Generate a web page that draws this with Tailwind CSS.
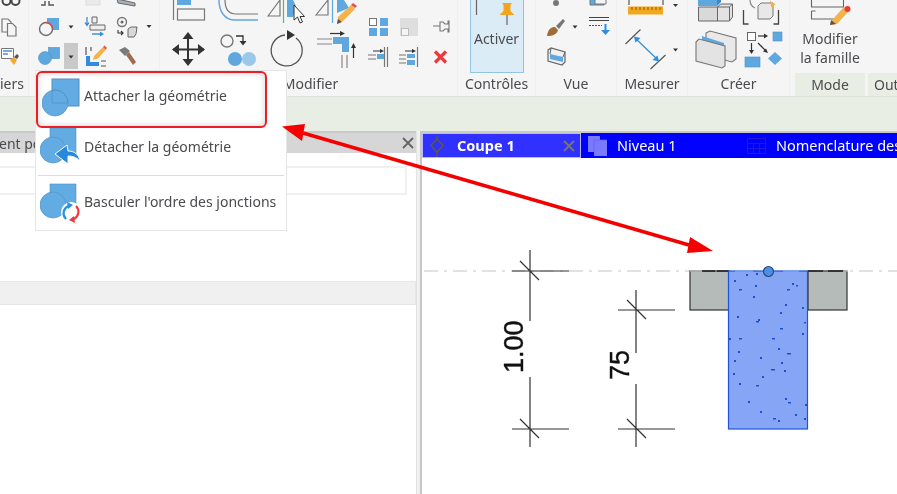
<!DOCTYPE html>
<html lang="fr">
<head>
<meta charset="utf-8">
<script src="https://cdn.jsdelivr.net/npm/@tailwindcss/browser@4"></script>
</head>
<body class="bg-white">
<div class="relative w-[897px] h-[494px] overflow-hidden bg-white font-['Noto_Sans','Open_Sans',sans-serif] text-[14px] text-[#4a4a4f] blur-[0.35px]">

  <!-- Ribbon -->
  <div class="flex h-[97px] bg-[#f5f5f5] border-b border-[#dfe3da]">
    <!-- P1 -->
    <div class="w-[29px] flex flex-col border-r border-[#efefef]">
      <svg class="h-[73px] w-[29px] shrink-0" viewBox="0 0 29 73" fill="none">
        <g stroke="#444" stroke-width="1.900"><circle cx="6.500" cy="1" r="4"/><circle cx="15.500" cy="1" r="4"/></g>
        <g stroke="#777" stroke-width="1.200" fill="#f5f5f5"><path d="M2 19h6l3 3v10H2z"/><path d="M7.500 23.500h5l3.500 3.500v9H7.500z"/></g>
        <path d="M1.500 48.500h12v10h-12z" stroke="#777" fill="#fff"/>
        <path d="M3 51h9M3 54h5" stroke="#4a90d0" stroke-width="1.300"/>
        <path d="M10 60l4-3 3 3-3 5z" fill="#f3a93a"/><path d="M14 57l3-3 2 2-2 3z" fill="#555"/>
      </svg>
      <div class="text-right pr-[5px] leading-[22px]">iers</div>
    </div>

    <!-- P2 -->
    <div class="w-[131px] border-r border-[#efefef]">
      <svg class="h-[73px] w-[131px]" viewBox="29 0 131 73" fill="none">
        <path d="M41 5h4V1M49 1v4h5" stroke="#555" stroke-width="1.400"/>
        <rect x="86" y="-6" width="14" height="11" fill="#e9e9e9" stroke="#ddd"/>
        <path d="M117 -1l18 4v3l-17-3z" fill="#a9b2ba" stroke="#666"/>
        <rect x="47" y="18" width="12" height="12" fill="#5fa8df"/>
        <circle cx="46" cy="29" r="6.500" fill="#f5f5f5" stroke="#6b6b6b" stroke-width="1.400"/>
        <path d="M46 22.500a6.500 6.500 0 0 1 6.500 6" stroke="#e04a4a" stroke-width="1.400"/>
        <path d="M68.500 25.500h5l-2.500 3z" fill="#333"/>
        <path d="M87 17v8M85 22.500l2 3 2-3" stroke="#2b84d6" stroke-width="1.200"/>
        <path d="M92 17h5v6h-5zM90 25h15v5H90z" stroke="#666" fill="#eee"/>
        <path d="M92 34h8" stroke="#2b8ee0" stroke-width="1.400"/><path d="M100 31.500l4 2.500-4 2.500z" fill="#2b8ee0"/>
        <circle cx="122" cy="22" r="4.500" stroke="#777" stroke-width="1.400"/><circle cx="122" cy="22" r="1.500" fill="#666"/>
        <path d="M118 30v3h5M121 31l2 2-2 2" stroke="#333" stroke-width="1.100"/>
        <path d="M128 29l3-2h6l-1 7-2 3h-6z" fill="#d9d9d9" stroke="#666"/>
        <path d="M146.500 25h5l-2.500 3z" fill="#333"/>
        <rect x="48.500" y="47.500" width="11" height="11" fill="#5fa8df" stroke="#4f8fbf" stroke-width=".6"/>
        <circle cx="45" cy="58" r="6.500" fill="#5fa8df" stroke="#4f8fbf" stroke-width=".6"/>
        <rect x="64" y="43" width="14" height="26" fill="#c9c9c9"/>
        <path d="M68.500 55.500h5l-2.500 3z" fill="#333"/>
        <path d="M86 47v8M91 47v4" stroke="#555" stroke-width="1.200"/>
        <path d="M86 56v10h13v-4h-9v-6z" fill="#2f8be0"/>
        <path d="M94 56l9-9 3 2.500-8 9-5 1.500z" fill="#f3b24a"/><path d="M103 47l1.500-1.500 2.500 2.500-1.500 1.500z" fill="#e55050"/>
        <path d="M101 61h5M101 66h5" stroke="#555" stroke-width="1.200"/>
        <path d="M119 50l6-3 5 4-5 5z" fill="#7a7a7a"/>
        <path d="M126 55l3-3 7 10-3 3z" fill="#a06b4f"/>
      </svg>
    </div>

    <!-- P3 -->
    <div class="w-[298px] flex flex-col border-r border-[#efefef]">
      <svg class="h-[73px] w-[298px] shrink-0" viewBox="160 0 298 73" fill="none">
        <path d="M173.500 0v20" stroke="#777" stroke-width="1.200"/>
        <rect x="177" y="-2" width="14" height="7" fill="#5fa8df"/>
        <rect x="177.500" y="9" width="27" height="11" stroke="#777" stroke-width="1.200"/>
        <path d="M219 0c0 12 6 20 16 20h23" stroke="#5fa8df" stroke-width="1.500"/>
        <path d="M225 0c0 9 4 14 11 14h22" stroke="#777" stroke-width="1.200"/>
        <path d="M268 16l12-16v16z" stroke="#777" stroke-width="1.200"/>
        <path d="M283.500 0v23" stroke="#5fb36a" stroke-width="1.200"/>
        <path d="M287 0h6l3 6-3 11h-6z" fill="#5fa8df"/>
        <path d="M294 5v15l3.500-3 2.500 6 2.500-1-2.500-5.500h4.500z" fill="#fff" stroke="#333"/>
        <path d="M316 15l12-15v15z" stroke="#777" stroke-width="1.200"/>
        <path d="M332.500 0v23" stroke="#5fa8df" stroke-width="1.200"/>
        <path d="M337 0h7l5 8-12 5z" fill="#5fa8df"/>
        <path d="M338 17l13-12 4 4-12 12-6 3z" fill="#f3b24a"/><path d="M337 24l1-5 4 3z" fill="#555"/>
        <path d="M351 5l2-2 4 3-2 2z" fill="#e55050"/>
        <path d="M188 34v31M173 49.500h31" stroke="#333" stroke-width="2"/>
        <path d="M188 32l5.500 7h-11zM188 66l5.500-7h-11zM172 49.500l7-5.500v11zM205 49.500l-7-5.500v11z" fill="#333"/>
        <circle cx="227" cy="41" r="6" stroke="#777" stroke-width="1.400"/>
        <path d="M236 36h7v7" stroke="#333" stroke-width="1.300"/><path d="M239.500 41h7l-3.500 4.500z" fill="#333"/>
        <circle cx="249" cy="59" r="7" fill="#9cc8e8"/>
        <circle cx="235" cy="59" r="7" fill="#5fa8df"/>
        <path d="M296 38a15.500 15.500 0 1 1-11-3" stroke="#555" stroke-width="1.300" fill="none"/>
        <path d="M287 30v10l8-5z" fill="#333"/>
        <path d="M317 39h15M317 44h15M342 55v13M347 55v13" stroke="#888" stroke-width="1.200"/>
        <path d="M330 33.500h10" stroke="#333" stroke-width="1.200"/><path d="M340 31l5 2.500-5 2.500z" fill="#333"/>
        <path d="M333 37h16v15h-7v-8h-9z" fill="#5fa8df"/>
        <path d="M353.500 46v12" stroke="#333" stroke-width="1.200"/><path d="M351 48l2.500-5 2.500 5z" fill="#333"/>
        <rect x="369.500" y="18.500" width="7" height="7" stroke="#777" fill="#fff"/>
        <rect x="380" y="18" width="8" height="8" fill="#5fa8df"/>
        <rect x="369" y="28" width="8" height="8" fill="#5fa8df"/>
        <rect x="380" y="28" width="8" height="8" fill="#5fa8df"/>
        <path d="M400 18h18v18h-18z" fill="#dedede"/>
        <rect x="401.500" y="28.500" width="7" height="7" fill="#f5f5f5" stroke="#bbb"/>
        <path d="M433 26h7M440 22h3l2 2h3v-3h1v11h-1v-3h-3l-2 2h-3z" stroke="#777" stroke-width="1.100"/>
        <path d="M368 55h8M368 59h8M387.500 47v20M384.500 47v20" stroke="#777" stroke-width="1.200"/>
        <path d="M373 51h8" stroke="#333" stroke-width="1"/><path d="M380 49l4 2-4 2z" fill="#333"/>
        <rect x="377" y="54" width="7" height="5" fill="#5fa8df"/>
        <path d="M399 55h7M399 59h7M399 63h7M417.500 47v20" stroke="#777" stroke-width="1.200"/>
        <path d="M405 51h8" stroke="#333" stroke-width="1"/><path d="M412 49l4 2-4 2z" fill="#333"/>
        <path d="M407 54h8v4h-8zM407 60h8v5h-8z" fill="#5fa8df"/>
        <path d="M435 51.500l11 11M446 51.500l-11 11" stroke="#f0383c" stroke-width="3.200"/>
      </svg>
      <div class="text-center leading-[22px] pl-[4px]">Modifier</div>
    </div>

    <!-- P4 -->
    <div class="w-[78px] flex flex-col items-center border-r border-[#efefef]">
      <div class="relative w-[54px] h-[73px] shrink-0 bg-[#dcecf6] border border-t-0 border-[#93c4e2] flex flex-col items-center">
        <svg class="w-[52px] h-[28px] shrink-0" viewBox="472 0 52 28" fill="none">
          <path d="M477.500 0v15" stroke="#666" stroke-width="1.200"/>
          <path d="M503 3h10l-1.500 2v6l4 4h-15l4-4V5z" fill="#f5a51d"/>
          <path d="M508 15v10" stroke="#666" stroke-width="1.200"/>
        </svg>
        <span class="leading-[20px] mt-[1px]">Activer</span>
      </div>
      <div class="leading-[22px]">Contrôles</div>
    </div>

    <!-- P5 -->
    <div class="w-[81px] flex flex-col border-r border-[#efefef]">
      <svg class="h-[73px] w-[81px] shrink-0" viewBox="536 0 81 73" fill="none">
        <circle cx="556" cy="3" r="3" fill="#777"/>
        <path d="M590 -2h14v7h-14z" fill="#5fa8df" stroke="#777"/><path d="M595 -2h11v6h-11z" fill="#f5f5f5" stroke="#777"/>
        <path d="M547 36c1-7 4-9 8-9l3 3c-1 4-5 6-11 6z" fill="#a06b35"/>
        <path d="M556 26l7-7 2 2-6 8z" fill="#777"/>
        <path d="M572.500 25.500h5l-2.500 3z" fill="#333"/>
        <path d="M589 17.500h20M589 20.500h20" stroke="#444" stroke-width="1.200"/>
        <path d="M589 25.500h13" stroke="#555" stroke-dasharray="2 1"/>
        <path d="M605.500 24v7" stroke="#2b8ee0" stroke-width="2"/><path d="M601 30h9l-4.500 5z" fill="#2b8ee0"/>
        <path d="M548 50l3-2 14 4v10l-3 3-14-4z" stroke="#666" stroke-width="1.200" fill="#f0f0f0"/>
        <path d="M550 54l13 3v5l-13-3z" fill="#5fa8df"/>
        <path d="M551 48l-1 6M565 52l-2 5" stroke="#666"/>
      </svg>
      <div class="text-center leading-[22px]">Vue</div>
    </div>

    <!-- P6 -->
    <div class="w-[71px] flex flex-col border-r border-[#efefef]">
      <svg class="h-[73px] w-[71px] shrink-0" viewBox="617 0 71 73" fill="none">
        <path d="M629 0v5M663 0v5" stroke="#555" stroke-width="1.200"/>
        <rect x="628" y="6.500" width="35" height="8" fill="#f3a71c"/>
        <path d="M632 7v3M636 7v3M640 7v3M644 7v3M648 7v3M652 7v3M656 7v3M660 7v3" stroke="#8a5a10"/>
        <path d="M673 4h5l-2.500 3z" fill="#333"/>
        <path d="M625.500 44l15-14.500M650.500 69l15-14" stroke="#555" stroke-width="1.200"/>
        <path d="M635 38l23 22" stroke="#2b8ee0" stroke-width="1.200"/>
        <path d="M634 36.500l6.500 1.500-5 4.500zM659 61.500l-6.500-1.500 5-4.500z" fill="#2b8ee0"/>
        <path d="M673 48.500h5l-2.500 3z" fill="#333"/>
      </svg>
      <div class="text-center leading-[22px]">Mesurer</div>
    </div>

    <!-- P7 -->
    <div class="w-[102px] flex flex-col border-r border-[#efefef]">
      <svg class="h-[73px] w-[102px] shrink-0" viewBox="688 0 102 73" fill="none">
        <path d="M698.500 7h19v14h-19z" fill="#d9d9d9" stroke="#666"/>
        <path d="M698 -2h19v8h-19z" fill="#5fa8df"/><path d="M717 -2l4 0v4l-4 4z" fill="#3e88c4"/>
        <path d="M717.500 21v-14l3-3h12v13l-3 4z" fill="#e3e3e3" stroke="#666"/>
        <path d="M729.500 7h-12M729.500 7v14M729.500 7l3-3" stroke="#666"/>
        <path d="M743.500 10v14h5M778.500 10v14h-5" stroke="#444" stroke-width="1.300"/>
        <path d="M750 0c0 6 3 7 5 8" stroke="#888" stroke-width="1.200"/>
        <path d="M758 6l3-3h12v13l-3 3h-12z" fill="#e8e8e8" stroke="#777"/>
        <path d="M770 0l2 3 4 1-3 2 1 3-3-2z" fill="#f3b24a"/>
        <path d="M706 33l4-2 26 7v21l-4 3-26-7z" fill="#e9e9e9" stroke="#777" stroke-width="1.100"/>
        <path d="M702 36l22 7v10l-22-7z" fill="#5fa8df"/>
        <path d="M696 42l3-3 26 7v20l-3 2-26-7z" fill="#e3e3e3" stroke="#777" stroke-width="1.100"/>
        <rect x="747.500" y="32.500" width="8" height="8" fill="#fff" stroke="#666"/>
        <path d="M758 36h7" stroke="#333" stroke-width="1.200"/><path d="M764 33.500l4 2.500-4 2.500z" fill="#333"/>
        <rect x="773" y="32" width="9" height="9" fill="#5fa8df" stroke="#4f8fbf" stroke-width=".6"/>
        <path d="M751.500 43v8" stroke="#333" stroke-width="1.200"/><path d="M749 50l2.500 4 2.500-4z" fill="#333"/>
        <path d="M758 43l7 7" stroke="#333" stroke-width="1.200"/><path d="M768 53l-5-1.500 3-3z" fill="#333"/>
        <rect x="745" y="57" width="15" height="10" fill="#5fa8df" stroke="#4f8fbf" stroke-width=".6"/>
        <path d="M775 52l7 6.500-7 6.500-7-6.500z" fill="#5fa8df"/>
      </svg>
      <div class="text-center leading-[22px]">Créer</div>
    </div>

    <div class="w-[5px]"></div>

    <!-- P8 -->
    <div class="w-[70px] flex flex-col items-center">
      <svg class="h-[28px] w-[70px] shrink-0" viewBox="795 0 70 28" fill="none">
        <path d="M811.500 0v7h32v-7" stroke="#666" stroke-width="1.100"/>
        <path d="M811.500 11v8h23M811.500 11h4" stroke="#666" stroke-width="1.100"/>
        <path d="M832 20l12-13 5 4-12 13-7 1z" fill="#f3b24a"/>
        <path d="M830 25l1-5 5 4z" fill="#555"/>
        <circle cx="847.500" cy="9" r="3" fill="#ef3a3a"/>
      </svg>
      <div class="text-center leading-[19px] h-[45px] mt-[1px] whitespace-nowrap">Modifier<br>la famille</div>
      <div class="w-full text-center leading-[23px] bg-[#e9eee4] mt-[-1px]">Mode</div>
    </div>

    <div class="w-[3px]"></div>

    <!-- P9 -->
    <div class="flex-1 flex flex-col justify-end overflow-hidden">
      <div class="bg-[#e9eee4] leading-[23px] pl-[6px] whitespace-nowrap">Out</div>
    </div>
  </div>

  <!-- Options band -->
  <div class="h-[34px] bg-[#e9eee4]"></div>

  <!-- Main -->
  <div class="flex h-[363px]">
    <!-- Left panel -->
    <div class="w-[417px] flex flex-col bg-white border-r border-[#e4e4e4]">
      <div class="h-[22px] flex items-center justify-between bg-[#d6d6d6] border-t-2 border-[#c9c9c9] overflow-hidden">
        <span class="ml-[-1px] whitespace-nowrap">ent po</span>
        <svg class="w-[12px] h-[12px] mr-[2px]" viewBox="0 0 12 12"><path d="M1 1l10 10M11 1L1 11" stroke="#666" stroke-width="1.800"/></svg>
      </div>
      <div class="h-[29px] w-[407px] mt-[13px] bg-white border-y-2 border-r-2 border-[#f0f0f0]"></div>
      <div class="h-[24px] mt-[86px] w-[416px] bg-[#f0f0f0] border border-l-0 border-[#e6e6e6]"></div>
    </div>
    <!-- Splitter -->
    <div class="w-[5px] bg-[#f0f0f0] border-r-2 border-[#c6c6c6]"></div>

    <!-- View -->
    <div class="flex-1 flex flex-col min-w-0">
      <div class="h-[2px] bg-[#c9c9c9]"></div>
      <div class="flex h-[25px] bg-[#0000ff] text-white text-[14.500px] overflow-hidden whitespace-nowrap">
        <div class="w-[159px] shrink-0 flex items-center bg-[#3030ff] border border-[#b8b8ff] font-bold pl-[5px]">
          <svg class="w-[18px] h-[22px] shrink-0" viewBox="0 0 18 22" fill="none"><path d="M9 4l6 6.500-6 6.500-6-6.500z" stroke="#5a5a40" stroke-width="1.600"/><path d="M9 1v3M9 17v5" stroke="#5a5a40" stroke-width="1.500"/></svg>
          <span class="ml-[11px]">Coupe 1</span>
          <svg class="w-[12px] h-[12px] ml-auto mr-[5px]" viewBox="0 0 12 12"><path d="M1 1l10 10M11 1L1 11" stroke="#77776a" stroke-width="1.800"/></svg>
        </div>
        <div class="w-[166px] shrink-0 flex items-center pl-[7px]">
          <svg class="w-[20px] h-[20px] shrink-0" viewBox="0 0 20 20"><path d="M0 0h12v4h7v16H6v-4H0z" fill="#7a7aff"/><path d="M6 4h13M6 4v12" stroke="#6060f0" stroke-width=".8"/></svg>
          <span class="ml-[9px]">Niveau 1</span>
        </div>
        <div class="flex items-center">
          <svg class="w-[20px] h-[16px] shrink-0" viewBox="0 0 20 16" fill="none"><path d="M.5.500h18v15H.500zM.5 5.500h18M.5 10.500h18M6.500 5.500v10M12.500 5.500v10" stroke="#1c1cd0"/></svg>
          <span class="ml-[9px]">Nomenclature des</span>
        </div>
      </div>
      <!-- Canvas -->
      <svg class="flex-1 w-full" viewBox="422 158 475 336" fill="none">
        <path d="M424 271h473" stroke="#c4c4c4" stroke-dasharray="14 6 3 6"/>
        <g stroke="#333" stroke-width="1.200">
          <path d="M512 271h57M512 429h57M530 250v71M530 377v70M520 261l19 19M520 419l19 19"/>
          <path d="M618 310h57M618 429h57M636 290v63M636 384v63M627 300l19 19M627 419l19 19"/>
        </g>
        <text transform="translate(523 373) rotate(-90)" font-family="Liberation Sans" font-size="27" fill="#111" stroke="#111" stroke-width=".4">1.00</text>
        <text transform="translate(629 380) rotate(-90)" font-family="Liberation Sans" font-size="27" fill="#111" stroke="#111" stroke-width=".4">75</text>
        <rect x="690" y="271" width="39" height="39" fill="#b4bbb9" stroke="#333" stroke-width="1.200"/>
        <rect x="808" y="271" width="39" height="39" fill="#b4bbb9" stroke="#333" stroke-width="1.200"/>
        <path d="M690 271h13" stroke="#c4c4c4" stroke-width="1.400"/>
        <path d="M843 271h5" stroke="#c4c4c4" stroke-width="1.400"/>
        <path d="M702 271h13M717 271h12M808 271h15M828 271h15" stroke="#222" stroke-width="1.400"/>
        <rect x="728.500" y="271" width="79" height="158" fill="#86a6f5" stroke="#1e54d8" stroke-width="1.200"/>
        <path d="M735 271h18M783 271h16" stroke="#86a6f5" stroke-width="1.400"/>
        <g fill="#1e4fd0">
          <rect x="734" y="280" width="2" height="2"/><rect x="746" y="274" width="2" height="2"/><rect x="756" y="273" width="2" height="2"/><rect x="739" y="289" width="3" height="1.500"/><rect x="755" y="285" width="2" height="2"/><rect x="753" y="296" width="2" height="2"/><rect x="792" y="283" width="2" height="2"/><rect x="796" y="285" width="2" height="1.500"/><rect x="787" y="289" width="3" height="1.500"/><rect x="785" y="304" width="2" height="2"/><rect x="802" y="307" width="2" height="2"/><rect x="780" y="312" width="2" height="2"/><rect x="737" y="316" width="2" height="2"/><rect x="756" y="321" width="3" height="1.500"/><rect x="758" y="319" width="2" height="2"/><rect x="804" y="322" width="2" height="1.500"/><rect x="780" y="328" width="3" height="1.500"/><rect x="802" y="333" width="2" height="2"/><rect x="729" y="338" width="2" height="2"/><rect x="739" y="338" width="3" height="1.500"/><rect x="772" y="338" width="3" height="1.500"/><rect x="738" y="351" width="2" height="2"/><rect x="778" y="348" width="2" height="2"/><rect x="787" y="353" width="4" height="1.500"/><rect x="734" y="360" width="2" height="2"/><rect x="760" y="357" width="2" height="2"/><rect x="781" y="362" width="2" height="2"/><rect x="771" y="369" width="4" height="1.500"/><rect x="784" y="370" width="2" height="2"/><rect x="733" y="373" width="2" height="2"/><rect x="762" y="376" width="2" height="2"/><rect x="739" y="383" width="2" height="2"/><rect x="756" y="385" width="3" height="1.500"/><rect x="785" y="398" width="2" height="2"/><rect x="788" y="402" width="3" height="1.500"/><rect x="748" y="401" width="2" height="2"/><rect x="805" y="404" width="2" height="2"/><rect x="760" y="411" width="2" height="2"/><rect x="795" y="414" width="2" height="2"/><rect x="773" y="418" width="3" height="1.500"/><rect x="778" y="420" width="2" height="2"/><rect x="804" y="418" width="2" height="2"/>
        </g>
        <circle cx="768.500" cy="271.500" r="5" fill="#4a90e8" stroke="#2c4a78" stroke-width="1.200"/>
      </svg>
    </div>
  </div>

  <!-- Dropdown menu -->
  <div class="absolute left-[35px] top-[70px] w-[252px] h-[161px] bg-white border border-[#e6e6e6] flex flex-col">
    <div class="h-[57px] w-[231px] shrink-0 flex items-start rounded-[6px] border-2 border-[#ee1c25] shadow-[inset_0_0_7px_rgba(0,0,0,0.18)] pl-[4px]">
      <svg class="w-[38px] h-[42px] shrink-0 mt-[5px]" viewBox="0 0 38 42"><rect x="10" y="1" width="27" height="27" fill="#63ace3" stroke="#4f8fbf"/><circle cx="13" cy="25" r="13" fill="#63ace3" stroke="#4f8fbf" stroke-width=".6"/><path d="M10 12.500a13 13 0 0 1 16 12.500H10z" fill="none" stroke="#4f8fbf" stroke-width=".6"/></svg>
      <span class="ml-[4px] mt-[13px] leading-[19px] whitespace-nowrap">Attacher la géométrie</span>
    </div>
    <div class="h-[47px] shrink-0 flex items-start pl-[4px]">
      <svg class="w-[41px] h-[38px] shrink-0" viewBox="0 0 41 38"><rect x="10" y="0" width="26" height="26" fill="#63ace3" stroke="#4f8fbf" stroke-width=".6"/><circle cx="13" cy="22" r="13" fill="#63ace3" stroke="#4f8fbf" stroke-width=".6"/><path d="M15 26l12-9 1 6c7 0 11 4 12 10-4-4-8-5-12-5v8z" fill="#2788dc" stroke="#fff" stroke-width="1"/></svg>
      <span class="ml-[3px] mt-[9px] leading-[19px] whitespace-nowrap">Détacher la géométrie</span>
    </div>
    <div class="h-px shrink-0 mx-[2px] bg-[#dcdcdc]"></div>
    <div class="h-[55px] flex items-start pl-[4px]">
      <svg class="w-[41px] h-[42px] shrink-0 mt-[7px]" viewBox="0 0 41 42"><rect x="10" y="1" width="26" height="25" fill="#63ace3" stroke="#4f8fbf" stroke-width=".6"/><circle cx="13" cy="22" r="13" fill="#63ace3" stroke="#4f8fbf" stroke-width=".6"/><circle cx="31" cy="29" r="10" fill="#fff"/><path d="M26 36c-4-4-3-10 2-13" stroke="#2b8ee0" stroke-width="2.200" fill="none"/><path d="M27 19l6 3-5 4z" fill="#2b8ee0"/><path d="M36 23c4 4 3 10-2 13" stroke="#f0383c" stroke-width="2.200" fill="none"/><path d="M35 40l-6-3 5-4z" fill="#f0383c"/></svg>
      <span class="ml-[3px] mt-[16px] leading-[19px] whitespace-nowrap">Basculer l'ordre des jonctions</span>
    </div>
  </div>

  <!-- Annotation arrow -->
  <svg class="absolute inset-0 w-[897px] h-[494px] pointer-events-none" viewBox="0 0 897 494" fill="none">
    <path d="M303 133L689 245" stroke="#f40000" stroke-width="3.600"/>
    <path d="M282 126.500L305 124L302 141z" fill="#f40000"/>
    <path d="M713 251L690 237L687 253z" fill="#f40000"/>
  </svg>
</div>
</body>
</html>
